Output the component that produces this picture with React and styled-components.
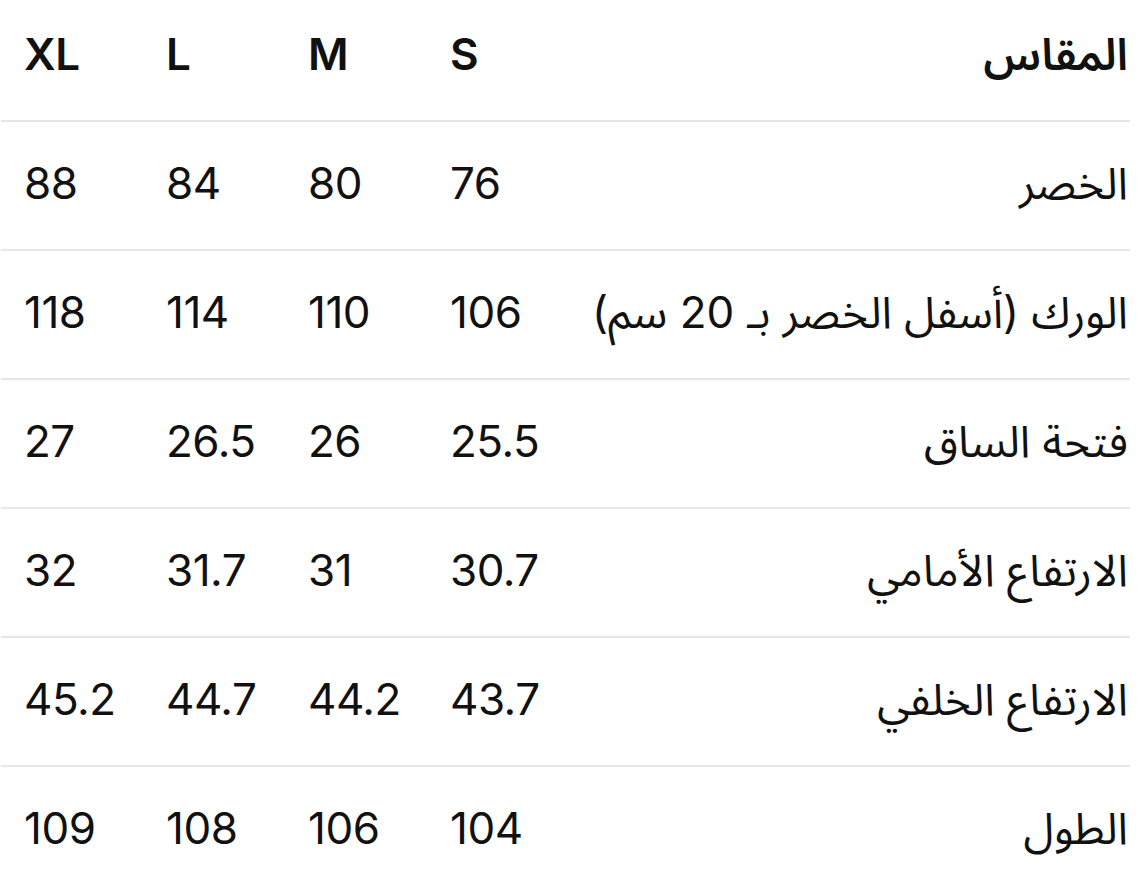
import React from "react";
import styled, { createGlobalStyle } from "styled-components";

const Global = createGlobalStyle`
  html, body { margin: 0; padding: 0; background: #ffffff; }
  body {
    font-family: Inter, "Noto Sans Arabic", "Noto Sans", "DejaVu Sans", sans-serif;
    color: #111111;
    overflow: hidden;
  }
`;

const Wrap = styled.div`
  padding: 0 13px 0 1px;
`;

const Table = styled.table`
  direction: rtl;
  width: 1129px;
  border-collapse: collapse;
  table-layout: fixed;
  font-size: 44px;
  line-height: 1;
`;

const HeadRow = styled.tr`
  height: 121px;
  border-bottom: 2px solid #e6e6e6;
`;

const Row = styled.tr`
  height: 129px;
  border-bottom: 2px solid #e6e6e6;
`;

const LabelCell = styled.td`
  box-sizing: border-box;
  text-align: right;
  padding: ${(p) => (p.$head ? "0 2px 12px 0" : "0 2px 6px 0")};
  font-weight: ${(p) => (p.$head ? 600 : 400)};
  vertical-align: middle;
  white-space: nowrap;
`;

const SizeCell = styled.td`
  box-sizing: border-box;
  width: 142px;
  text-align: left;
  direction: ltr;
  padding: ${(p) => (p.$head ? "0 0 12px 23px" : "0 0 6px 23px")};
  font-weight: ${(p) => (p.$head ? 600 : 400)};
  vertical-align: middle;
  letter-spacing: -0.5px;
`;

const sizes = ["S", "M", "L", "XL"];

const rows = [
  ["الخصر", ["76", "80", "84", "88"]],
  ["الورك (أسفل الخصر بـ 20 سم)", ["106", "110", "114", "118"]],
  ["فتحة الساق", ["25.5", "26", "26.5", "27"]],
  ["الارتفاع الأمامي", ["30.7", "31", "31.7", "32"]],
  ["الارتفاع الخلفي", ["43.7", "44.2", "44.7", "45.2"]],
  ["الطول", ["104", "106", "108", "109"]],
];

export default function App() {
  return (
    <>
      <Global />
      <Wrap>
        <Table>
          <thead>
            <HeadRow>
              <LabelCell as="th" $head>المقاس</LabelCell>
              {sizes.map((s) => (
                <SizeCell as="th" $head key={s}>{s}</SizeCell>
              ))}
            </HeadRow>
          </thead>
          <tbody>
            {rows.map(([label, vals]) => (
              <Row key={label}>
                <LabelCell>{label}</LabelCell>
                {vals.map((v, i) => (
                  <SizeCell key={i}>{v}</SizeCell>
                ))}
              </Row>
            ))}
          </tbody>
        </Table>
      </Wrap>
    </>
  );
}
